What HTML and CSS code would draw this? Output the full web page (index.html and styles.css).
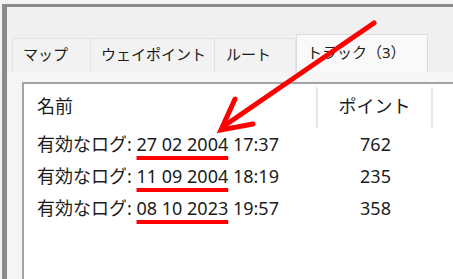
FILE: index.html
```html
<!DOCTYPE html>
<html lang="ja">
<head>
<meta charset="utf-8">
<link rel="stylesheet" href="styles.css">
</head>
<body>
<div class="window">
  <div class="tabs">
    <div class="tab tab-map">マップ</div>
    <div class="tab tab-wpt">ウェイポイント</div>
    <div class="tab tab-route">ルート</div>
    <div class="tab tab-track active">トラック（3）</div>
  </div>
  <div class="panel">
    <div class="list">
      <div class="head">
        <div class="col-name hcell">名前</div>
        <div class="col-pts hcell">ポイント</div>
        <div class="col-rest hcell"></div>
      </div>
      <div class="row">
        <div class="col-name">有効なログ: <span class="mark">27 02 2004</span> 17:37</div>
        <div class="col-pts">762</div>
      </div>
      <div class="row">
        <div class="col-name">有効なログ: <span class="mark">11 09 2004</span> 18:19</div>
        <div class="col-pts">235</div>
      </div>
      <div class="row">
        <div class="col-name">有効なログ: <span class="mark">08 10 2023</span> 19:57</div>
        <div class="col-pts">358</div>
      </div>
    </div>
  </div>
</div>
<svg class="arrow" width="453" height="279" viewBox="0 0 453 279">
  <line x1="374" y1="23" x2="224" y2="126" stroke="#f00" stroke-width="5" stroke-linecap="round"/>
  <polyline points="235,99 221,130 253,124" fill="none" stroke="#f00" stroke-width="5" stroke-linejoin="miter" stroke-linecap="round"/>
</svg>
</body>
</html>
```
FILE: styles.css
```css
html, body {
  margin: 0;
  height: 100%;
}
body {
  background: #f3f3f3;
  padding: 4px 0 0 2px;
  box-sizing: border-box;
  overflow: hidden;
  position: relative;
  font-family: "Noto Sans", "Noto Sans CJK JP", sans-serif;
  color: #1b1b1b;
}
.window {
  border-top: 3px solid #8a8a8a;
  border-left: 5px solid #8a8a8a;
  background: #f0f0f0;
  height: 100%;
  box-sizing: border-box;
  display: flex;
  flex-direction: column;
}
.tabs {
  display: flex;
  align-items: flex-end;
  padding-left: 5px;
  margin-top: 27px;
  height: 38px;
}
.tab {
  height: 34px;
  box-sizing: border-box;
  border: 1px solid #e2e2e2;
  border-bottom: none;
  border-left: none;
  background: #f2f2f2;
  font-size: 15px;
  line-height: 30px;
  padding-left: 10px;
  white-space: nowrap;
}
.tab-map { width: 79px; border-left: 1px solid #e2e2e2; }
.tab-wpt { width: 124px; }
.tab-route { width: 81px; padding-left: 11px; }
.tab-track {
  width: 132px;
  padding-left: 10px;
}
.tab.active {
  height: 38px;
  background: #f9f9f9;
  border: 1px solid #dcdcdc;
  border-bottom: none;
  line-height: 34px;
}
.panel {
  flex: 1;
  background: #f5f5f5;
  padding: 10px 0 0 15px;
  display: flex;
}
.list {
  flex: 1;
  background: #fff;
  border-top: 2px solid #a3a3a3;
  border-left: 2px solid #a3a3a3;
  font-size: 18px;
}
.head {
  display: flex;
  height: 44px;
}
.hcell {
  box-sizing: border-box;
  border-right: 2px solid #e6e6e6;
  margin-top: 3px;
  line-height: 38px;
}
.row {
  display: flex;
  height: 32px;
  line-height: 32px;
}
.col-name {
  width: 294px;
  padding-left: 13px;
  box-sizing: border-box;
  white-space: nowrap;
}
.col-pts {
  width: 115px;
  text-align: center;
  box-sizing: border-box;
}
.col-rest {
  width: 40px;
  border-right: none;
}
.mark {
  text-decoration: underline;
  text-decoration-color: #f00;
  text-decoration-thickness: 4px;
  text-underline-offset: 5px;
  text-decoration-skip-ink: none;
}
.arrow {
  position: absolute;
  left: 0;
  top: 0;
  pointer-events: none;
}
```
